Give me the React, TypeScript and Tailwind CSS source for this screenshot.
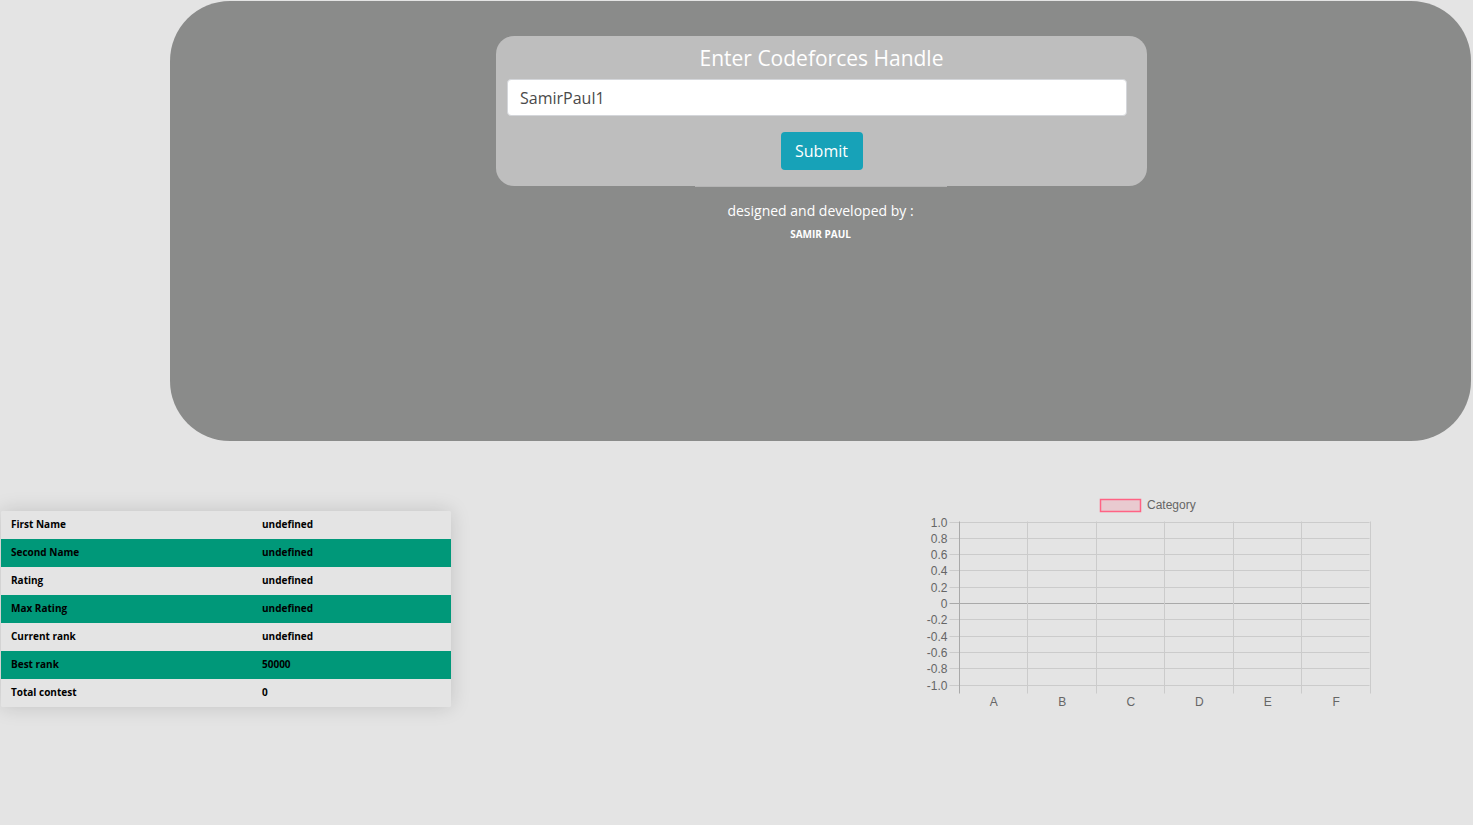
import React from 'react'

const rows: [string, string][] = [
  ['First Name', 'undefined'],
  ['Second Name', 'undefined'],
  ['Rating', 'undefined'],
  ['Max Rating', 'undefined'],
  ['Current rank', 'undefined'],
  ['Best rank', '50000'],
  ['Total contest', '0'],
]

const yTicks = ['1.0', '0.8', '0.6', '0.4', '0.2', '0', '-0.2', '-0.4', '-0.6', '-0.8', '-1.0']
const xLabels = ['A', 'B', 'C', 'D', 'E', 'F']

function RatingChart() {
  const left = 39.5
  const right = 450.5
  const top = 30.5
  const bottom = 193.5
  const stepY = (bottom - top) / 10
  const stepX = (right - left) / 6
  return (
    <svg width="460" height="222" className="block" style={{ fontFamily: '"Liberation Sans", Arial, sans-serif' }}>
      <rect x="181.5" y="8.5" width="40" height="12" fill="rgba(255,99,132,0.2)" stroke="rgb(255,99,132)" strokeWidth="1.5" />
      <text x="228" y="18" fontSize="12" fill="#666">Category</text>
      {yTicks.map((t, i) => {
        const y = Math.round(top + stepY * i) + 0.5
        return (
          <g key={t}>
            <line x1={left - 9} x2={right} y1={y} y2={y} stroke={t === '0' ? '#a9a9a9' : '#cbcbcb'} strokeWidth="1" />
            <text x={left - 11} y={y + 4} fontSize="12" fill="#666" textAnchor="end">{t}</text>
          </g>
        )
      })}
      {Array.from({ length: 7 }).map((_, i) => {
        const x = Math.round(left + stepX * i) + 0.5
        return <line key={i} x1={x} x2={x} y1={top} y2={bottom + 9} stroke={i === 0 ? '#a9a9a9' : '#cbcbcb'} strokeWidth="1" />
      })}
      {xLabels.map((l, i) => (
        <text key={l} x={left + 1 + stepX * (i + 0.5)} y={215} fontSize="12" fill="#666" textAnchor="middle">{l}</text>
      ))}
    </svg>
  )
}

export default function App() {
  return (
    <div className="min-h-screen bg-[#e4e4e4] pt-px" style={{ fontFamily: '"Open Sans", "Noto Sans", sans-serif' }}>
      <div className="ml-[170px] mr-[2px] h-[440px] rounded-[60px] bg-[#8a8b8a] flex flex-col items-center pt-[35px]">
        <div className="ml-[2px] w-[651px] rounded-[18px] bg-[#bebebe] px-[11px] pt-[8px] pb-[16px] flex flex-col items-center">
          <h1 className="text-[21px] leading-[28px] text-white">Enter Codeforces Handle</h1>
          <input
            className="mt-[7px] self-start w-[620px] h-[37px] rounded-[4px] border border-[#d4d6da] bg-white px-[12px] text-[16px] text-[#4a4a4a] outline-none"
            defaultValue="SamirPaul1"
          />
          <button className="mt-[16px] h-[38px] w-[82px] rounded-[4px] bg-[#17a2b8] text-[16px] text-white">Submit</button>
        </div>
        <div className="w-[252px] h-px bg-[#b4b4b4]" />
        <p className="mt-[14px] text-[14px] leading-[20px] text-white">designed and developed by :</p>
        <p className="mt-[6px] text-[10px] font-bold text-white">SAMIR PAUL</p>
      </div>

      <div className="flex items-start justify-between">
        <div className="ml-px mt-[70px] w-[450px] shadow-[0_0_20px_rgba(0,0,0,0.15)] rounded-[2px] overflow-hidden">
          {rows.map(([k, v], i) => (
            <div
              key={k}
              className={`flex h-[28px] items-center pb-px text-[10px] font-bold text-black ${i % 2 === 1 ? 'bg-[#009879]' : 'bg-[#e4e4e4]'}`}
            >
              <span className="w-[261px] pl-[10px]">{k}</span>
              <span>{v}</span>
            </div>
          ))}
        </div>
        <div className="mt-[50px] mr-[94px]">
          <RatingChart />
        </div>
      </div>
    </div>
  )
}
